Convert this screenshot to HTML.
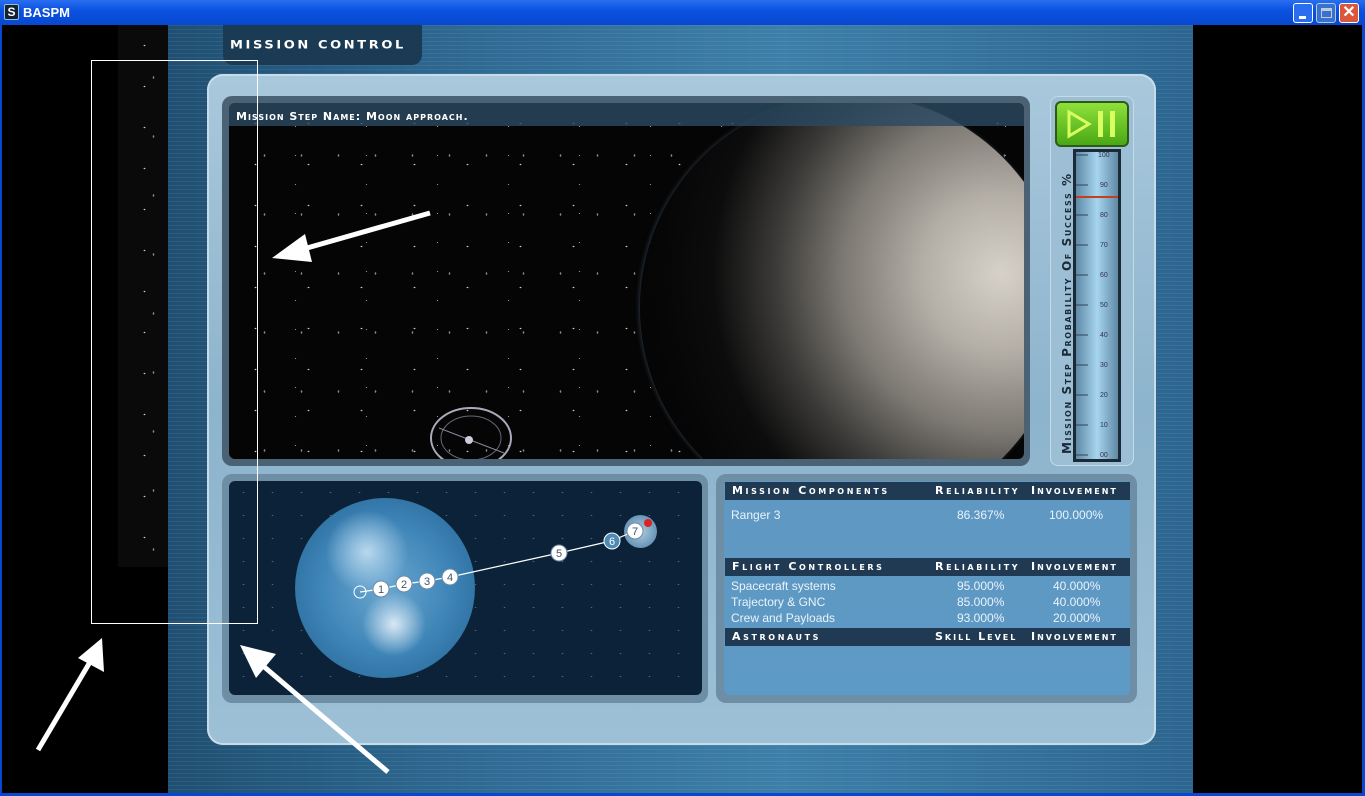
<!DOCTYPE html>
<html><head><meta charset="utf-8"><style>
*{margin:0;padding:0;box-sizing:border-box}
body{width:1365px;height:796px;overflow:hidden;background:#000;font-family:"Liberation Sans",sans-serif;position:relative}
.a{position:absolute}
.sc{font-family:"DejaVu Sans","Liberation Sans",sans-serif;font-variant:small-caps;letter-spacing:2.6px;color:#fff;font-weight:bold}
.hdr{position:absolute;left:725px;width:405px;height:18px;background:#1f3a52;font-size:11px;line-height:18px}
.row{position:absolute;left:731px;font-size:12px;color:#eaf3fa}
.stars{background-image:radial-gradient(#ccc 0.7px,transparent 1.1px),radial-gradient(#888 0.6px,transparent 1px),radial-gradient(#aaa 0.6px,transparent 1px);background-size:53px 41px,37px 59px,71px 29px;background-position:0 0,17px 23px,31px 9px}
</style></head><body>
<!-- title bar -->
<div class="a" style="left:0;top:0;width:1365px;height:25px;background:linear-gradient(#2a6ef0,#0a52e0 40%,#0848d0)"></div>
<div class="a" style="left:4px;top:4px;width:15px;height:16px;background:#123;border:1px solid #9bd;border-radius:2px;color:#fff;font-size:12px;font-weight:bold;line-height:14px;text-align:center">S</div>
<div class="a" style="left:23px;top:5px;color:#fff;font-weight:bold;font-size:13px;font-family:'Liberation Sans',sans-serif">BASPM</div>
<div class="a" style="left:1293px;top:3px;width:20px;height:20px;background:#2a6ef0;border:1px solid #fff;border-radius:3px"><div class="a" style="left:5px;top:12px;width:7px;height:3px;background:#fff"></div></div>
<div class="a" style="left:1316px;top:3px;width:20px;height:20px;background:#3a70d0;border:1px solid #acd;border-radius:3px"><div class="a" style="left:4px;top:4px;width:11px;height:10px;border:1px solid #bcd;border-top-width:3px"></div></div>
<div class="a" style="left:1339px;top:3px;width:20px;height:20px;background:#d9573a;border:1px solid #fff;border-radius:3px;color:#fff;font-size:16px;line-height:18px;text-align:center;font-weight:bold">✕</div>
<div class="a" style="left:0;top:25px;width:2px;height:771px;background:#0848d0"></div>
<div class="a" style="left:1362px;top:25px;width:3px;height:771px;background:#0848d0"></div>
<div class="a" style="left:0;top:793px;width:1365px;height:3px;background:#0848d0"></div>
<!-- left star strip -->
<div class="a stars" style="left:118px;top:25px;width:50px;height:542px;background-color:#0a0a0a"></div>
<!-- blue bg -->
<div class="a" style="left:168px;top:25px;width:1025px;height:768px;background:linear-gradient(90deg,#1f4f72,#2f6a93 30%,#3d7fa8 60%,#2c6690);"></div>
<div class="a" style="left:168px;top:25px;width:1025px;height:768px;background:repeating-linear-gradient(#ffffff10 0 1px,transparent 1px 4px)"></div>
<!-- mission control tab -->
<div class="a" style="left:223px;top:25px;width:199px;height:40px;background:#1b3a54;border-radius:0 0 10px 10px"></div>
<div class="a" style="left:230px;top:38px;color:#fff;font-size:13px;font-weight:bold;letter-spacing:2.6px;font-family:'DejaVu Sans',sans-serif;transform:scaleY(0.85);transform-origin:0 50%">MISSION CONTROL</div>
<!-- main frame -->
<div class="a" style="left:207px;top:74px;width:949px;height:671px;background:linear-gradient(#a9c8dc,#8db4cd 50%,#9dc0d6);border-radius:16px;box-shadow:inset 0 0 0 2px #c7dcea"></div>
<!-- viewport -->
<div class="a" style="left:222px;top:96px;width:808px;height:370px;background:#4a6274;border-radius:10px"></div>
<div class="a stars" style="left:229px;top:103px;width:795px;height:356px;background-color:#050505;border-radius:6px;overflow:hidden">
 <div class="a" style="left:411px;top:-8px;width:425px;height:425px;border-radius:50%;background:radial-gradient(circle at 85% 42%,#d6d1c9 0%,#b3aea6 18%,#7d7973 36%,#3a3937 52%,#0c0c0c 66%,#050505 80%);box-shadow:-1px 0 4px #2a3540"></div>
 <div class="a" style="left:0;top:0;width:795px;height:23px;background:#2a4a62cc"></div>
 <div class="a" style="left:7px;top:7px;color:#fff;font-size:11px;letter-spacing:1px;font-family:'DejaVu Sans',sans-serif;font-variant:small-caps;font-weight:bold">Mission Step Name: Moon approach.</div>
 <svg class="a" style="left:190px;top:295px" width="100" height="70"><ellipse cx="52" cy="40" rx="40" ry="30" fill="none" stroke="#aab" stroke-width="2"/><ellipse cx="52" cy="40" rx="30" ry="22" fill="none" stroke="#667" stroke-width="1"/><line x1="20" y1="30" x2="85" y2="55" stroke="#889"/><circle cx="50" cy="42" r="4" fill="#ccd"/></svg>
</div>
<!-- gauge -->
<div class="a" style="left:1050px;top:96px;width:84px;height:370px;background:#9cbfd5;border-radius:8px;box-shadow:inset 0 0 0 1px #c5dbe8"></div>
<div class="a" style="left:1055px;top:101px;width:74px;height:46px;background:linear-gradient(#8fe03a,#4aa816);border:2px solid #2d5a14;border-radius:6px"></div>
<svg class="a" style="left:1055px;top:101px" width="74" height="46"><path d="M14 11 L34 23 L14 35 Z" fill="none" stroke="#d8ff60" stroke-width="3"/><rect x="43" y="10" width="5" height="26" fill="#d8ff60"/><rect x="55" y="10" width="5" height="26" fill="#d8ff60"/></svg>
<div class="a" style="left:1073px;top:149px;width:48px;height:313px;background:linear-gradient(90deg,#5e8aa6,#a7d4ee 50%,#5e8aa6);border:3px solid #1b2a36"></div>
<div class="a" style="left:1076px;top:196px;width:42px;height:2px;background:#c2401a"></div>
<svg class="a" style="left:1076px;top:152px" width="42" height="308" font-size="7" fill="#334" font-family="Liberation Sans">
<g stroke="#345">
<line x1="0" y1="3" x2="12" y2="3"/><line x1="0" y1="33" x2="12" y2="33"/><line x1="0" y1="63" x2="12" y2="63"/><line x1="0" y1="93" x2="12" y2="93"/><line x1="0" y1="123" x2="12" y2="123"/><line x1="0" y1="153" x2="12" y2="153"/><line x1="0" y1="183" x2="12" y2="183"/><line x1="0" y1="213" x2="12" y2="213"/><line x1="0" y1="243" x2="12" y2="243"/><line x1="0" y1="273" x2="12" y2="273"/><line x1="0" y1="303" x2="12" y2="303"/>
</g>
<text x="22" y="5">100</text><text x="24" y="35">90</text><text x="24" y="65">80</text><text x="24" y="95">70</text><text x="24" y="125">60</text><text x="24" y="155">50</text><text x="24" y="185">40</text><text x="24" y="215">30</text><text x="24" y="245">20</text><text x="24" y="275">10</text><text x="24" y="305">00</text></svg>
<div class="a sc" style="left:1060px;top:454px;transform:rotate(-90deg);transform-origin:0 0;white-space:nowrap;color:#1b2a36;font-size:12px;letter-spacing:1.6px;width:300px">Mission Step Probability Of Success %</div>
<!-- earth panel -->
<div class="a" style="left:222px;top:474px;width:486px;height:229px;background:#6d8ea4;border-radius:10px"></div>
<div class="a" style="left:229px;top:481px;width:473px;height:214px;background:#0b2238;border-radius:6px;background-image:radial-gradient(#4a6a88 0.6px,transparent 1px);background-size:29px 23px"></div>
<div class="a" style="left:295px;top:498px;width:180px;height:180px;border-radius:50%;background:radial-gradient(circle at 40% 30%,#b8d8ee 0%,transparent 25%),radial-gradient(circle at 55% 70%,#d8e8f4 0%,transparent 20%),radial-gradient(circle at 50% 50%,#6aa6d0 0%,#3f86b8 50%,#2a6a9c 85%,#4a8cbc)"></div>
<div class="a" style="left:624px;top:515px;width:33px;height:33px;border-radius:50%;background:radial-gradient(#b0cce0,#4a7ea4)"></div>
<svg class="a" style="left:229px;top:481px" width="473" height="214" font-size="11" font-family="Liberation Sans" text-anchor="middle">
<polyline points="131,111 152,108 175,103 198,100 221,96 330,72 382,60 406,50" fill="none" stroke="#fff" stroke-width="1.2"/>
<circle cx="131" cy="111" r="6" fill="none" stroke="#fff"/>
<g fill="#fff" stroke="#6a8aa4"><circle cx="152" cy="108" r="8"/><circle cx="175" cy="103" r="8"/><circle cx="198" cy="100" r="8"/><circle cx="221" cy="96" r="8"/><circle cx="330" cy="72" r="8"/><circle cx="406" cy="50" r="8"/></g>
<circle cx="383" cy="60" r="8" fill="#4f8ab4" stroke="#fff"/>
<circle cx="419" cy="42" r="4" fill="#d22"/>
<g fill="#456"><text x="152" y="112">1</text><text x="175" y="107">2</text><text x="198" y="104">3</text><text x="221" y="100">4</text><text x="330" y="76">5</text><text x="406" y="54">7</text></g><text x="383" y="64" fill="#fff">6</text>
</svg>
<!-- table panel -->
<div class="a" style="left:716px;top:474px;width:421px;height:229px;background:#6d8ea4;border-radius:10px"></div>
<div class="a" style="left:724px;top:481px;width:406px;height:214px;background:linear-gradient(#5f98c2,#5e9ac6);border-radius:6px"></div>
<div class="hdr sc" style="top:482px"><span class="a" style="left:7px">Mission Components</span><span class="a" style="left:210px">Reliability</span><span class="a" style="left:306px;letter-spacing:2px">Involvement</span></div>
<div class="row" style="top:508px">Ranger 3</div><div class="row" style="top:508px;left:957px">86.367%</div><div class="row" style="top:508px;left:1049px">100.000%</div>
<div class="hdr sc" style="top:558px"><span class="a" style="left:7px">Flight Controllers</span><span class="a" style="left:210px">Reliability</span><span class="a" style="left:306px;letter-spacing:2px">Involvement</span></div>
<div class="row" style="top:579px">Spacecraft systems</div><div class="row" style="top:579px;left:957px">95.000%</div><div class="row" style="top:579px;left:1053px">40.000%</div>
<div class="row" style="top:595px">Trajectory &amp; GNC</div><div class="row" style="top:595px;left:957px">85.000%</div><div class="row" style="top:595px;left:1053px">40.000%</div>
<div class="row" style="top:611px">Crew and Payloads</div><div class="row" style="top:611px;left:957px">93.000%</div><div class="row" style="top:611px;left:1053px">20.000%</div>
<div class="hdr sc" style="top:628px"><span class="a" style="left:7px">Astronauts</span><span class="a" style="left:210px;letter-spacing:2px">Skill Level</span><span class="a" style="left:306px;letter-spacing:2px">Involvement</span></div>
<!-- annotations -->
<div class="a" style="left:91px;top:60px;width:167px;height:564px;border:1px solid #fff"></div>
<svg class="a" style="left:0;top:0" width="1365" height="796">
<g stroke="#fff" stroke-width="5" fill="#fff">
<line x1="430" y1="213" x2="300" y2="250"/><polygon points="272,258 305,234 312,262" stroke="none"/>
<line x1="38" y1="750" x2="90" y2="662"/><polygon points="102,638 104,672 78,658" stroke="none"/>
<line x1="388" y1="772" x2="262" y2="665"/><polygon points="240,645 276,654 256,678" stroke="none"/>
</g></svg>
</body></html>
